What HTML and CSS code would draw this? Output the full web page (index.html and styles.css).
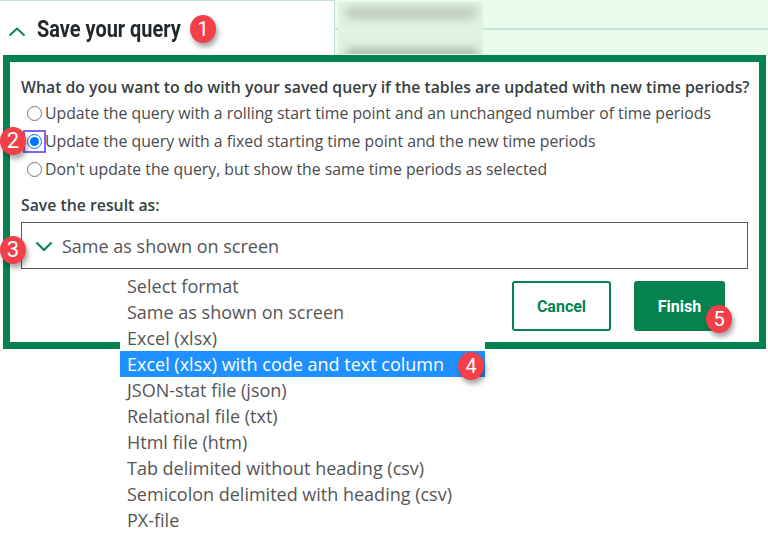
FILE: index.html
```html
<!DOCTYPE html>
<html lang="en">
<head>
    <meta charset="UTF-8">
    <meta name="viewport" content="width=device-width, initial-scale=1.0">
    <title>Save your query</title>
    <link rel="stylesheet" href="styles.css">
</head>
<body>
    <div class="page">
        <div class="top-row">
            <div class="heading-panel">
                <svg class="chevron-up" width="18" height="11" viewBox="0 0 18 11"><path d="M1.5 9.5L9 2.5L16.5 9.5" fill="none" stroke="#0a8350" stroke-width="2"/></svg>
                <h2>Save your query</h2>
            </div>
            <div class="table-panel">
                <div class="table-cell"></div>
                <div class="table-cell"></div>
            </div>
            <div class="blurred">
                <span class="blur-line blur-a"></span>
                <span class="blur-line blur-b"></span>
            </div>
        </div>

        <div class="save-box">
            <p class="question">What do you want to do with your saved query if the tables are updated with new time periods?</p>
            <label class="radio-row"><input type="radio" name="update">Update the query with a rolling start time point and an unchanged number of time periods</label>
            <label class="radio-row focused"><input type="radio" name="update" checked>Update the query with a fixed starting time point and the new time periods</label>
            <label class="radio-row"><input type="radio" name="update">Don't update the query, but show the same time periods as selected</label>
            <p class="save-label">Save the result as:</p>
            <div class="select-box">
                <svg width="18" height="11" viewBox="0 0 18 11"><path d="M1.5 1.5L9 9L16.5 1.5" fill="none" stroke="#0a8350" stroke-width="2.2"/></svg>
                <span>Same as shown on screen</span>
            </div>
            <div class="buttons">
                <button class="btn-cancel">Cancel</button>
                <button class="btn-finish">Finish</button>
            </div>
        </div>

        <ul class="format-list">
            <li>Select format</li>
            <li>Same as shown on screen</li>
            <li>Excel (xlsx)</li>
            <li class="selected">Excel (xlsx) with code and text column</li>
            <li>JSON-stat file (json)</li>
            <li>Relational file (txt)</li>
            <li>Html file (htm)</li>
            <li>Tab delimited without heading (csv)</li>
            <li>Semicolon delimited with heading (csv)</li>
            <li>PX-file</li>
        </ul>

        <span class="badge badge-1">1</span>
        <span class="badge badge-2">2</span>
        <span class="badge badge-3">3</span>
        <span class="badge badge-4">4</span>
        <span class="badge badge-5">5</span>
    </div>
</body>
</html>
```

FILE: styles.css
```css
* {
    box-sizing: border-box;
}
body {
    margin: 0;
    background-color: white;
    font-family: "Open Sans", Arial, sans-serif;
    color: #4a4a4a;
}
.page {
    position: relative;
    width: 768px;
    height: 539px;
    overflow: hidden;
}
.top-row {
    display: flex;
    height: 55px;
}
.heading-panel {
    display: flex;
    align-items: center;
    width: 335px;
    padding: 3px 0 0 8px;
    border-top: 1px solid #c6e0dc;
    border-right: 1px solid #c6e0dc;
}
.heading-panel h2 {
    margin: 0 0 0 11px;
    font-family: Roboto, Arial, sans-serif;
    font-size: 23px;
    font-weight: 700;
    color: #22282c;
    white-space: nowrap;
    transform: scaleX(0.867);
    transform-origin: left center;
}
.chevron-up {
    margin-top: 4px;
}
.table-panel {
    flex: 1;
    background-color: #e9fdec;
}
.table-cell {
    height: 30px;
    border-bottom: 2px solid #c6e0dc;
}
.table-cell + .table-cell {
    height: 25px;
    border-bottom: none;
}
.blurred {
    position: absolute;
    left: 338px;
    top: 2px;
    width: 145px;
    height: 52px;
    overflow: hidden;
    background-color: #e1f4e1;
}
.blur-line {
    position: absolute;
    background-color: #bccabb;
    filter: blur(5px);
}
.blur-a {
    left: 8px;
    top: 5px;
    width: 130px;
    height: 12px;
}
.blur-b {
    left: 8px;
    top: 46px;
    width: 132px;
    height: 14px;
    background-color: #aebcae;
}
.save-box {
    height: 294px;
    width: 763px;
    margin-left: 3px;
    padding: 15px 11px 0;
    border: 7px solid #05824f;
}
.question {
    margin: 0;
    font-size: 15.8px;
    line-height: 20px;
    font-weight: 600;
    color: #383f44;
    white-space: nowrap;
}
.radio-row {
    display: flex;
    align-items: center;
    height: 28px;
    font-size: 15.8px;
    white-space: nowrap;
}
.radio-row input {
    width: 15px;
    height: 15px;
    margin: 0 3px 0 6px;
}
.question + .radio-row {
    margin-top: 2px;
}
.focused input {
    outline: 2px solid #7b68ee;
    outline-offset: 2px;
}
.save-label {
    margin: 12px 0 0;
    font-size: 15.8px;
    line-height: 20px;
    font-weight: 600;
    color: #383f44;
}
.select-box {
    display: flex;
    align-items: center;
    gap: 9px;
    height: 47px;
    margin-top: 7px;
    padding: 1px 0 0 13px;
    border: 1px solid #555b60;
    font-size: 18px;
    color: #555;
}
.buttons {
    display: flex;
    justify-content: flex-end;
    gap: 23px;
    margin-top: 12px;
    padding-right: 23px;
}
.buttons button {
    height: 50px;
    border-radius: 3px;
    font-family: Roboto, Arial, sans-serif;
    font-size: 16px;
    font-weight: 700;
}
.btn-cancel {
    width: 99px;
    background-color: white;
    color: #05824f;
    border: 2px solid #05824f;
}
.btn-finish {
    width: 91px;
    background-color: #05824f;
    color: white;
    border: none;
}
.format-list {
    position: absolute;
    left: 120px;
    top: 273px;
    width: 365px;
    margin: 0;
    padding: 0;
    list-style: none;
    background-color: white;
    font-size: 18px;
    color: #555;
}
.format-list li {
    height: 26px;
    line-height: 26px;
    padding-left: 7px;
    white-space: nowrap;
}
.format-list .selected {
    background-color: #1e90ff;
    color: white;
}
.badge {
    position: absolute;
    width: 26px;
    height: 28px;
    border-radius: 50%;
    background-color: #f23f49;
    box-shadow: 2px 4px 5px rgba(0,0,0,0.35);
    color: white;
    font-family: Roboto, Arial, sans-serif;
    font-size: 20px;
    line-height: 28px;
    text-align: center;
}
.badge-1 { left: 190px; top: 15px; }
.badge-2 { left: 0; top: 127px; font-size: 22px; }
.badge-3 { left: 0; top: 236px; font-size: 22px; }
.badge-4 { left: 458px; top: 352px; }
.badge-5 { left: 706px; top: 305px; }
```
